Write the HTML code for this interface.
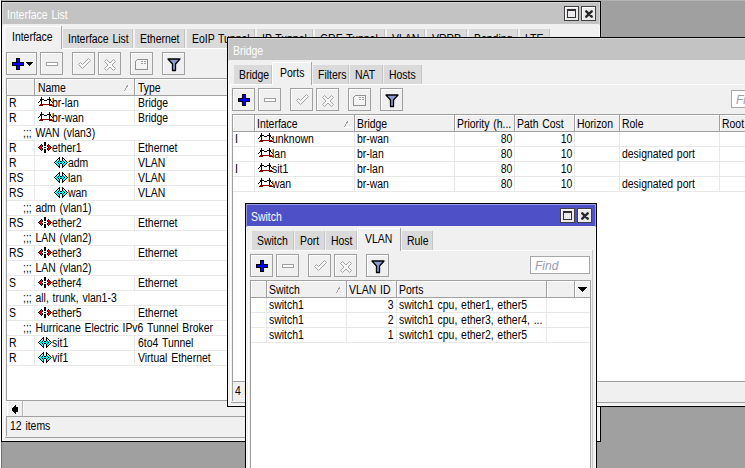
<!DOCTYPE html>
<html><head><meta charset="utf-8"><style>
html,body{margin:0;padding:0;}
body{width:745px;height:468px;overflow:hidden;position:relative;background:#a0a0a0;font-family:"Liberation Sans",sans-serif;font-size:11px;}
.win{position:absolute;overflow:hidden;}
.win div{position:absolute;}
.win svg{display:block;}
.t{white-space:nowrap;line-height:13px;font-size:12px;word-spacing:1px;transform:scaleX(0.87);transform-origin:0 0;}
.t.r{transform-origin:100% 0;}
</style></head><body>
<div style="position:absolute;left:0;top:0;width:745px;height:1px;background:#b4b4b4"></div><div style="position:absolute;left:0;top:0;width:1px;height:468px;background:#ffffff"></div><div style="position:absolute;left:1px;top:0;width:1px;height:468px;background:#707070"></div><div style="position:absolute;left:601px;top:0;width:1px;height:37px;background:#aaaaaa"></div><div class="win" style="left:1px;top:1px;width:600px;height:441px;z-index:1"><div style="left:0px;top:0px;width:600px;height:441px;background:#000;"></div><div style="left:1px;top:1px;width:598px;height:439px;background:#f8f8f8;"></div><div style="left:1px;top:1px;width:598px;height:23px;background:#d8d8d8;"></div><div style="left:2px;top:2px;width:596px;height:437px;background:#f0f0f0;"></div><div style="left:2px;top:2px;width:596px;height:21px;background:#c3c3c3;"></div><div class="t" style="left:6px;top:8px;color:#ffffff;">Interface List</div><div style="left:580px;top:5px;width:15px;height:15px;background:#404040;"></div><div style="left:581px;top:6px;width:13px;height:13px;background:#ffffff;"></div><div style="left:582px;top:7px;width:12px;height:12px;background:#eceaec;"></div><div style="left:584px;top:9px;"><svg width="8" height="8" viewBox="0 0 8 8" shape-rendering="crispEdges"><path d="M1.3,1.3 L6.7,6.7 M6.7,1.3 L1.3,6.7" stroke="#282828" stroke-width="2.4" stroke-linecap="round" shape-rendering="geometricPrecision"/></svg></div><div style="left:563px;top:5px;width:15px;height:15px;background:#404040;"></div><div style="left:564px;top:6px;width:13px;height:13px;background:#ffffff;"></div><div style="left:565px;top:7px;width:12px;height:12px;background:#eceaec;"></div><div style="left:566px;top:8px;width:9px;height:9px;background:#303030;"></div><div style="left:567px;top:10px;width:7px;height:6px;background:#eceaec;"></div><div style="left:3px;top:47px;width:593px;height:1px;background:#ffffff;"></div><div style="left:3px;top:47px;width:1px;height:390px;background:#ffffff;"></div><div style="left:595px;top:47px;width:1px;height:390px;background:#a0a0a0;"></div><div style="left:62px;top:28px;width:70px;height:19px;background:#dadada;"></div><div style="left:131px;top:28px;width:1px;height:19px;background:#c4c4c4;"></div><div class="t" style="left:67px;top:32px;color:#000;">Interface List</div><div style="left:134px;top:28px;width:50px;height:19px;background:#dadada;"></div><div style="left:183px;top:28px;width:1px;height:19px;background:#c4c4c4;"></div><div class="t" style="left:139px;top:32px;color:#000;">Ethernet</div><div style="left:186px;top:28px;width:68px;height:19px;background:#dadada;"></div><div style="left:253px;top:28px;width:1px;height:19px;background:#c4c4c4;"></div><div class="t" style="left:191px;top:32px;color:#000;">EoIP Tunnel</div><div style="left:256px;top:28px;width:56px;height:19px;background:#dadada;"></div><div style="left:311px;top:28px;width:1px;height:19px;background:#c4c4c4;"></div><div class="t" style="left:261px;top:32px;color:#000;">IP Tunnel</div><div style="left:314px;top:28px;width:70px;height:19px;background:#dadada;"></div><div style="left:383px;top:28px;width:1px;height:19px;background:#c4c4c4;"></div><div class="t" style="left:319px;top:32px;color:#000;">GRE Tunnel</div><div style="left:386px;top:28px;width:38px;height:19px;background:#dadada;"></div><div style="left:423px;top:28px;width:1px;height:19px;background:#c4c4c4;"></div><div class="t" style="left:391px;top:32px;color:#000;">VLAN</div><div style="left:426px;top:28px;width:40px;height:19px;background:#dadada;"></div><div style="left:465px;top:28px;width:1px;height:19px;background:#c4c4c4;"></div><div class="t" style="left:431px;top:32px;color:#000;">VRRP</div><div style="left:468px;top:28px;width:49px;height:19px;background:#dadada;"></div><div style="left:516px;top:28px;width:1px;height:19px;background:#c4c4c4;"></div><div class="t" style="left:473px;top:32px;color:#000;">Bonding</div><div style="left:519px;top:28px;width:30px;height:19px;background:#dadada;"></div><div style="left:548px;top:28px;width:1px;height:19px;background:#c4c4c4;"></div><div class="t" style="left:524px;top:32px;color:#000;">LTE</div><div style="left:3px;top:25px;width:58px;height:23px;background:#f0f0f0;"></div><div style="left:3px;top:25px;width:1px;height:23px;background:#ffffff;"></div><div style="left:3px;top:25px;width:58px;height:1px;background:#ffffff;"></div><div style="left:60px;top:25px;width:1px;height:23px;background:#a8a8a8;"></div><div class="t" style="left:11px;top:30px;color:#000;">Interface</div><div style="left:5px;top:51px;width:31px;height:23px;background:#a0a0a0;"></div><div style="left:6px;top:52px;width:29px;height:21px;background:#ffffff;"></div><div style="left:7px;top:53px;width:28px;height:20px;background:#f0f0f0;"></div><div style="left:11px;top:57px;"><svg width="12" height="12" viewBox="0 0 12 12" shape-rendering="crispEdges"><rect x="4" y="0" width="4" height="12" fill="#000"/><rect x="0" y="4" width="12" height="4" fill="#000"/><rect x="5" y="1" width="2" height="10" fill="#0000ff"/><rect x="1" y="5" width="10" height="2" fill="#0000ff"/></svg></div><div style="left:25px;top:61px;"><svg width="7" height="4" viewBox="0 0 7 4" shape-rendering="crispEdges"><polygon points="0,0 7,0 3.5,4" fill="#000"/></svg></div><div style="left:39px;top:51px;width:23px;height:23px;background:#a0a0a0;"></div><div style="left:40px;top:52px;width:21px;height:21px;background:#ffffff;"></div><div style="left:41px;top:53px;width:20px;height:20px;background:#f0f0f0;"></div><div style="left:45px;top:61px;"><svg width="12" height="4" viewBox="0 0 12 4" shape-rendering="crispEdges"><rect x="0.5" y="0.5" width="11" height="3" fill="#fff" stroke="#a0a0a0"/></svg></div><div style="left:71px;top:51px;width:23px;height:23px;background:#a0a0a0;"></div><div style="left:72px;top:52px;width:21px;height:21px;background:#ffffff;"></div><div style="left:73px;top:53px;width:20px;height:20px;background:#f0f0f0;"></div><div style="left:77px;top:57px;"><svg width="14" height="12" viewBox="0 0 14 12" shape-rendering="crispEdges"><polygon points="0.5,6.5 2.5,4.5 4.5,6.5 10.5,0.5 12.5,2.5 4.5,10.5" fill="#f6f6f6" stroke="#a4a4a4" stroke-width="1" shape-rendering="geometricPrecision"/></svg></div><div style="left:97px;top:51px;width:23px;height:23px;background:#a0a0a0;"></div><div style="left:98px;top:52px;width:21px;height:21px;background:#ffffff;"></div><div style="left:99px;top:53px;width:20px;height:20px;background:#f0f0f0;"></div><div style="left:103px;top:58px;"><svg width="13" height="13" viewBox="0 0 13 13" shape-rendering="crispEdges"><polygon points="0.5,2.5 2.5,0.5 6,4 9.5,0.5 11.5,2.5 8,6 11.5,9.5 9.5,11.5 6,8 2.5,11.5 0.5,9.5 4,6" fill="#f6f6f6" stroke="#a4a4a4" stroke-width="1" shape-rendering="geometricPrecision"/></svg></div><div style="left:129px;top:51px;width:23px;height:23px;background:#a0a0a0;"></div><div style="left:130px;top:52px;width:21px;height:21px;background:#ffffff;"></div><div style="left:131px;top:53px;width:20px;height:20px;background:#f0f0f0;"></div><div style="left:134px;top:58px;"><svg width="14" height="11" viewBox="0 0 14 11" shape-rendering="crispEdges"><path d="M2.5,0.5 H12.5 V10.5 H0.5 V2.5 Z" fill="#f4f4f4" stroke="#909090" shape-rendering="crispEdges"/><rect x="2" y="2" width="1" height="1" fill="#ffffff"/><rect x="6" y="2" width="2" height="1" fill="#a0a0a0"/><rect x="9" y="2" width="2" height="1" fill="#a0a0a0"/><rect x="6" y="4" width="2" height="1" fill="#a0a0a0"/><rect x="9" y="4" width="2" height="1" fill="#a0a0a0"/></svg></div><div style="left:161px;top:51px;width:23px;height:23px;background:#a0a0a0;"></div><div style="left:162px;top:52px;width:21px;height:21px;background:#ffffff;"></div><div style="left:163px;top:53px;width:20px;height:20px;background:#f0f0f0;"></div><div style="left:166px;top:57px;"><svg width="14" height="14" viewBox="0 0 14 14" shape-rendering="crispEdges"><path d="M1,1 H13 L8.5,6 V12.5 H5.5 V6 Z" fill="#8c9ad0" stroke="#000" stroke-width="1.3" stroke-linejoin="round" shape-rendering="geometricPrecision"/></svg></div><div style="left:5px;top:77px;width:589px;height:323px;background:#a0a0a0;"></div><div style="left:6px;top:78px;width:587px;height:321px;background:#ffffff;"></div><div style="left:5px;top:77px;width:589px;height:18px;background:#a0a0a0;"></div><div style="left:6px;top:78px;width:587px;height:16px;background:#ffffff;"></div><div style="left:7px;top:79px;width:586px;height:15px;background:#f0f0f0;"></div><div style="left:33px;top:78px;width:1px;height:16px;background:#a0a0a0;"></div><div style="left:34px;top:78px;width:1px;height:16px;background:#ffffff;"></div><div class="t" style="left:37px;top:81px;color:#000;">Name</div><div style="left:133px;top:78px;width:1px;height:16px;background:#a0a0a0;"></div><div style="left:134px;top:78px;width:1px;height:16px;background:#ffffff;"></div><div class="t" style="left:137px;top:81px;color:#000;">Type</div><div style="left:259px;top:78px;width:1px;height:16px;background:#a0a0a0;"></div><div style="left:260px;top:78px;width:1px;height:16px;background:#ffffff;"></div><div style="left:123px;top:84px;"><svg width="8" height="7" viewBox="0 0 8 7" shape-rendering="crispEdges"><rect x="3" y="0" width="1" height="1" fill="#a0a0a0"/><rect x="4" y="0" width="1" height="1" fill="#ffffff"/><rect x="2" y="1" width="2" height="1" fill="#a0a0a0"/><rect x="5" y="1" width="1" height="1" fill="#ffffff"/><rect x="2" y="2" width="1" height="1" fill="#a0a0a0"/><rect x="5" y="2" width="1" height="1" fill="#ffffff"/><rect x="1" y="3" width="1" height="1" fill="#a0a0a0"/><rect x="6" y="3" width="1" height="1" fill="#ffffff"/><rect x="1" y="4" width="1" height="1" fill="#a0a0a0"/><rect x="6" y="4" width="1" height="1" fill="#ffffff"/><rect x="0" y="5" width="1" height="1" fill="#a0a0a0"/><rect x="7" y="5" width="1" height="1" fill="#ffffff"/><rect x="0" y="6" width="8" height="1" fill="#ffffff"/></svg></div><div style="left:6px;top:109px;width:587px;height:1px;background:#e8e8e8;"></div><div style="left:33px;top:95px;width:1px;height:15px;background:#e8e8e8;"></div><div style="left:133px;top:95px;width:1px;height:15px;background:#e8e8e8;"></div><div style="left:259px;top:95px;width:1px;height:15px;background:#e8e8e8;"></div><div class="t" style="left:8px;top:96px;color:#000;">R</div><div style="left:34px;top:95px;"><svg width="18" height="10" viewBox="0 0 18 10" shape-rendering="crispEdges"><rect x="6" y="1" width="1" height="1" fill="#000"/><rect x="14" y="1" width="1" height="1" fill="#000"/><rect x="6" y="2" width="1" height="1" fill="#000"/><rect x="14" y="2" width="1" height="1" fill="#000"/><rect x="5" y="3" width="4" height="1" fill="#000"/><rect x="12" y="3" width="4" height="1" fill="#000"/><rect x="5" y="4" width="2" height="1" fill="#000"/><rect x="9" y="4" width="3" height="1" fill="#000"/><rect x="14" y="4" width="2" height="1" fill="#000"/><rect x="4" y="5" width="1" height="1" fill="#000"/><rect x="6" y="5" width="1" height="1" fill="#000"/><rect x="14" y="5" width="1" height="1" fill="#000"/><rect x="16" y="5" width="1" height="1" fill="#000"/><rect x="3" y="6" width="1" height="1" fill="#000"/><rect x="6" y="6" width="1" height="1" fill="#000"/><rect x="14" y="6" width="1" height="1" fill="#000"/><rect x="17" y="6" width="1" height="1" fill="#000"/><rect x="6" y="7" width="1" height="1" fill="#000"/><rect x="14" y="7" width="1" height="1" fill="#000"/><rect x="5" y="8" width="12" height="1" fill="#880000"/><rect x="4" y="9" width="4" height="1" fill="#880000"/><rect x="14" y="9" width="4" height="1" fill="#880000"/></svg></div><div class="t" style="left:51px;top:96px;color:#000;">br-lan</div><div class="t" style="left:137px;top:96px;color:#000;">Bridge</div><div style="left:6px;top:124px;width:587px;height:1px;background:#e8e8e8;"></div><div style="left:33px;top:110px;width:1px;height:15px;background:#e8e8e8;"></div><div style="left:133px;top:110px;width:1px;height:15px;background:#e8e8e8;"></div><div style="left:259px;top:110px;width:1px;height:15px;background:#e8e8e8;"></div><div class="t" style="left:8px;top:111px;color:#000;">R</div><div style="left:34px;top:110px;"><svg width="18" height="10" viewBox="0 0 18 10" shape-rendering="crispEdges"><rect x="6" y="1" width="1" height="1" fill="#000"/><rect x="14" y="1" width="1" height="1" fill="#000"/><rect x="6" y="2" width="1" height="1" fill="#000"/><rect x="14" y="2" width="1" height="1" fill="#000"/><rect x="5" y="3" width="4" height="1" fill="#000"/><rect x="12" y="3" width="4" height="1" fill="#000"/><rect x="5" y="4" width="2" height="1" fill="#000"/><rect x="9" y="4" width="3" height="1" fill="#000"/><rect x="14" y="4" width="2" height="1" fill="#000"/><rect x="4" y="5" width="1" height="1" fill="#000"/><rect x="6" y="5" width="1" height="1" fill="#000"/><rect x="14" y="5" width="1" height="1" fill="#000"/><rect x="16" y="5" width="1" height="1" fill="#000"/><rect x="3" y="6" width="1" height="1" fill="#000"/><rect x="6" y="6" width="1" height="1" fill="#000"/><rect x="14" y="6" width="1" height="1" fill="#000"/><rect x="17" y="6" width="1" height="1" fill="#000"/><rect x="6" y="7" width="1" height="1" fill="#000"/><rect x="14" y="7" width="1" height="1" fill="#000"/><rect x="5" y="8" width="12" height="1" fill="#880000"/><rect x="4" y="9" width="4" height="1" fill="#880000"/><rect x="14" y="9" width="4" height="1" fill="#880000"/></svg></div><div class="t" style="left:51px;top:111px;color:#000;">br-wan</div><div class="t" style="left:137px;top:111px;color:#000;">Bridge</div><div style="left:6px;top:139px;width:587px;height:1px;background:#e8e8e8;"></div><div class="t" style="left:22px;top:126px;color:#000;">;;; WAN (vlan3)</div><div style="left:6px;top:154px;width:587px;height:1px;background:#e8e8e8;"></div><div style="left:33px;top:140px;width:1px;height:15px;background:#e8e8e8;"></div><div style="left:133px;top:140px;width:1px;height:15px;background:#e8e8e8;"></div><div style="left:259px;top:140px;width:1px;height:15px;background:#e8e8e8;"></div><div class="t" style="left:8px;top:141px;color:#000;">R</div><div style="left:35px;top:140px;"><svg width="16" height="12" viewBox="0 0 16 12" shape-rendering="crispEdges"><rect x="8" y="1" width="2" height="1" fill="#000"/><rect x="8" y="2" width="2" height="1" fill="#000"/><rect x="5" y="3" width="1" height="1" fill="#000"/><rect x="8" y="3" width="2" height="1" fill="#000"/><rect x="12" y="3" width="1" height="1" fill="#000"/><rect x="4" y="4" width="1" height="1" fill="#000"/><rect x="5" y="4" width="1" height="1" fill="#ff0000"/><rect x="6" y="4" width="1" height="1" fill="#000"/><rect x="8" y="4" width="2" height="1" fill="#000"/><rect x="11" y="4" width="1" height="1" fill="#000"/><rect x="12" y="4" width="1" height="1" fill="#ff0000"/><rect x="13" y="4" width="1" height="1" fill="#000"/><rect x="3" y="5" width="1" height="1" fill="#000"/><rect x="4" y="5" width="2" height="1" fill="#ff0000"/><rect x="6" y="5" width="1" height="1" fill="#000"/><rect x="11" y="5" width="1" height="1" fill="#000"/><rect x="12" y="5" width="2" height="1" fill="#ff0000"/><rect x="14" y="5" width="1" height="1" fill="#000"/><rect x="2" y="6" width="1" height="1" fill="#000"/><rect x="3" y="6" width="2" height="1" fill="#ff0000"/><rect x="5" y="6" width="1" height="1" fill="#000"/><rect x="8" y="6" width="2" height="1" fill="#000"/><rect x="12" y="6" width="1" height="1" fill="#000"/><rect x="13" y="6" width="2" height="1" fill="#ff0000"/><rect x="15" y="6" width="1" height="1" fill="#000"/><rect x="3" y="7" width="1" height="1" fill="#000"/><rect x="4" y="7" width="2" height="1" fill="#ff0000"/><rect x="6" y="7" width="1" height="1" fill="#000"/><rect x="11" y="7" width="1" height="1" fill="#000"/><rect x="12" y="7" width="2" height="1" fill="#ff0000"/><rect x="14" y="7" width="1" height="1" fill="#000"/><rect x="4" y="8" width="1" height="1" fill="#000"/><rect x="5" y="8" width="1" height="1" fill="#ff0000"/><rect x="6" y="8" width="1" height="1" fill="#000"/><rect x="8" y="8" width="2" height="1" fill="#000"/><rect x="11" y="8" width="1" height="1" fill="#000"/><rect x="12" y="8" width="1" height="1" fill="#ff0000"/><rect x="13" y="8" width="1" height="1" fill="#000"/><rect x="5" y="9" width="1" height="1" fill="#000"/><rect x="8" y="9" width="2" height="1" fill="#000"/><rect x="12" y="9" width="1" height="1" fill="#000"/><rect x="8" y="10" width="2" height="1" fill="#000"/><rect x="8" y="11" width="2" height="1" fill="#000"/></svg></div><div class="t" style="left:51px;top:141px;color:#000;">ether1</div><div class="t" style="left:137px;top:141px;color:#000;">Ethernet</div><div style="left:6px;top:169px;width:587px;height:1px;background:#e8e8e8;"></div><div style="left:33px;top:155px;width:1px;height:15px;background:#e8e8e8;"></div><div style="left:133px;top:155px;width:1px;height:15px;background:#e8e8e8;"></div><div style="left:259px;top:155px;width:1px;height:15px;background:#e8e8e8;"></div><div class="t" style="left:8px;top:156px;color:#000;">R</div><div style="left:52px;top:155px;"><svg width="16" height="12" viewBox="0 0 16 12" shape-rendering="crispEdges"><rect x="6" y="1" width="1" height="1" fill="#000"/><rect x="9" y="1" width="1" height="1" fill="#000"/><rect x="5" y="2" width="2" height="1" fill="#000"/><rect x="9" y="2" width="2" height="1" fill="#000"/><rect x="4" y="3" width="1" height="1" fill="#000"/><rect x="5" y="3" width="1" height="1" fill="#e8ffff"/><rect x="6" y="3" width="1" height="1" fill="#000"/><rect x="9" y="3" width="1" height="1" fill="#000"/><rect x="10" y="3" width="1" height="1" fill="#e8ffff"/><rect x="11" y="3" width="1" height="1" fill="#000"/><rect x="3" y="4" width="1" height="1" fill="#000"/><rect x="4" y="4" width="1" height="1" fill="#e8ffff"/><rect x="5" y="4" width="1" height="1" fill="#00ffff"/><rect x="6" y="4" width="1" height="1" fill="#000"/><rect x="9" y="4" width="1" height="1" fill="#000"/><rect x="10" y="4" width="1" height="1" fill="#00ffff"/><rect x="11" y="4" width="1" height="1" fill="#e8ffff"/><rect x="12" y="4" width="1" height="1" fill="#000"/><rect x="2" y="5" width="1" height="1" fill="#000"/><rect x="3" y="5" width="2" height="1" fill="#00ffff"/><rect x="5" y="5" width="1" height="1" fill="#000"/><rect x="6" y="5" width="1" height="1" fill="#00ffff"/><rect x="7" y="5" width="2" height="1" fill="#000"/><rect x="9" y="5" width="1" height="1" fill="#00ffff"/><rect x="10" y="5" width="1" height="1" fill="#000"/><rect x="11" y="5" width="2" height="1" fill="#00ffff"/><rect x="13" y="5" width="1" height="1" fill="#000"/><rect x="1" y="6" width="1" height="1" fill="#000"/><rect x="2" y="6" width="1" height="1" fill="#e8ffff"/><rect x="3" y="6" width="1" height="1" fill="#00ffff"/><rect x="4" y="6" width="1" height="1" fill="#000"/><rect x="5" y="6" width="6" height="1" fill="#00ffff"/><rect x="11" y="6" width="1" height="1" fill="#000"/><rect x="12" y="6" width="2" height="1" fill="#00ffff"/><rect x="14" y="6" width="1" height="1" fill="#000"/><rect x="2" y="7" width="1" height="1" fill="#000"/><rect x="3" y="7" width="2" height="1" fill="#00ffff"/><rect x="5" y="7" width="1" height="1" fill="#000"/><rect x="6" y="7" width="1" height="1" fill="#00ffff"/><rect x="7" y="7" width="2" height="1" fill="#000"/><rect x="9" y="7" width="1" height="1" fill="#00ffff"/><rect x="10" y="7" width="1" height="1" fill="#000"/><rect x="11" y="7" width="2" height="1" fill="#00ffff"/><rect x="13" y="7" width="1" height="1" fill="#000"/><rect x="3" y="8" width="1" height="1" fill="#000"/><rect x="4" y="8" width="2" height="1" fill="#00ffff"/><rect x="6" y="8" width="1" height="1" fill="#000"/><rect x="9" y="8" width="1" height="1" fill="#000"/><rect x="10" y="8" width="2" height="1" fill="#00ffff"/><rect x="12" y="8" width="1" height="1" fill="#000"/><rect x="4" y="9" width="1" height="1" fill="#000"/><rect x="5" y="9" width="1" height="1" fill="#00ffff"/><rect x="6" y="9" width="1" height="1" fill="#000"/><rect x="9" y="9" width="1" height="1" fill="#000"/><rect x="10" y="9" width="1" height="1" fill="#00ffff"/><rect x="11" y="9" width="1" height="1" fill="#000"/><rect x="5" y="10" width="2" height="1" fill="#000"/><rect x="9" y="10" width="2" height="1" fill="#000"/><rect x="6" y="11" width="1" height="1" fill="#000"/><rect x="9" y="11" width="1" height="1" fill="#000"/></svg></div><div class="t" style="left:67px;top:156px;color:#000;">adm</div><div class="t" style="left:137px;top:156px;color:#000;">VLAN</div><div style="left:6px;top:184px;width:587px;height:1px;background:#e8e8e8;"></div><div style="left:33px;top:170px;width:1px;height:15px;background:#e8e8e8;"></div><div style="left:133px;top:170px;width:1px;height:15px;background:#e8e8e8;"></div><div style="left:259px;top:170px;width:1px;height:15px;background:#e8e8e8;"></div><div class="t" style="left:8px;top:171px;color:#000;">RS</div><div style="left:52px;top:170px;"><svg width="16" height="12" viewBox="0 0 16 12" shape-rendering="crispEdges"><rect x="6" y="1" width="1" height="1" fill="#000"/><rect x="9" y="1" width="1" height="1" fill="#000"/><rect x="5" y="2" width="2" height="1" fill="#000"/><rect x="9" y="2" width="2" height="1" fill="#000"/><rect x="4" y="3" width="1" height="1" fill="#000"/><rect x="5" y="3" width="1" height="1" fill="#e8ffff"/><rect x="6" y="3" width="1" height="1" fill="#000"/><rect x="9" y="3" width="1" height="1" fill="#000"/><rect x="10" y="3" width="1" height="1" fill="#e8ffff"/><rect x="11" y="3" width="1" height="1" fill="#000"/><rect x="3" y="4" width="1" height="1" fill="#000"/><rect x="4" y="4" width="1" height="1" fill="#e8ffff"/><rect x="5" y="4" width="1" height="1" fill="#00ffff"/><rect x="6" y="4" width="1" height="1" fill="#000"/><rect x="9" y="4" width="1" height="1" fill="#000"/><rect x="10" y="4" width="1" height="1" fill="#00ffff"/><rect x="11" y="4" width="1" height="1" fill="#e8ffff"/><rect x="12" y="4" width="1" height="1" fill="#000"/><rect x="2" y="5" width="1" height="1" fill="#000"/><rect x="3" y="5" width="2" height="1" fill="#00ffff"/><rect x="5" y="5" width="1" height="1" fill="#000"/><rect x="6" y="5" width="1" height="1" fill="#00ffff"/><rect x="7" y="5" width="2" height="1" fill="#000"/><rect x="9" y="5" width="1" height="1" fill="#00ffff"/><rect x="10" y="5" width="1" height="1" fill="#000"/><rect x="11" y="5" width="2" height="1" fill="#00ffff"/><rect x="13" y="5" width="1" height="1" fill="#000"/><rect x="1" y="6" width="1" height="1" fill="#000"/><rect x="2" y="6" width="1" height="1" fill="#e8ffff"/><rect x="3" y="6" width="1" height="1" fill="#00ffff"/><rect x="4" y="6" width="1" height="1" fill="#000"/><rect x="5" y="6" width="6" height="1" fill="#00ffff"/><rect x="11" y="6" width="1" height="1" fill="#000"/><rect x="12" y="6" width="2" height="1" fill="#00ffff"/><rect x="14" y="6" width="1" height="1" fill="#000"/><rect x="2" y="7" width="1" height="1" fill="#000"/><rect x="3" y="7" width="2" height="1" fill="#00ffff"/><rect x="5" y="7" width="1" height="1" fill="#000"/><rect x="6" y="7" width="1" height="1" fill="#00ffff"/><rect x="7" y="7" width="2" height="1" fill="#000"/><rect x="9" y="7" width="1" height="1" fill="#00ffff"/><rect x="10" y="7" width="1" height="1" fill="#000"/><rect x="11" y="7" width="2" height="1" fill="#00ffff"/><rect x="13" y="7" width="1" height="1" fill="#000"/><rect x="3" y="8" width="1" height="1" fill="#000"/><rect x="4" y="8" width="2" height="1" fill="#00ffff"/><rect x="6" y="8" width="1" height="1" fill="#000"/><rect x="9" y="8" width="1" height="1" fill="#000"/><rect x="10" y="8" width="2" height="1" fill="#00ffff"/><rect x="12" y="8" width="1" height="1" fill="#000"/><rect x="4" y="9" width="1" height="1" fill="#000"/><rect x="5" y="9" width="1" height="1" fill="#00ffff"/><rect x="6" y="9" width="1" height="1" fill="#000"/><rect x="9" y="9" width="1" height="1" fill="#000"/><rect x="10" y="9" width="1" height="1" fill="#00ffff"/><rect x="11" y="9" width="1" height="1" fill="#000"/><rect x="5" y="10" width="2" height="1" fill="#000"/><rect x="9" y="10" width="2" height="1" fill="#000"/><rect x="6" y="11" width="1" height="1" fill="#000"/><rect x="9" y="11" width="1" height="1" fill="#000"/></svg></div><div class="t" style="left:67px;top:171px;color:#000;">lan</div><div class="t" style="left:137px;top:171px;color:#000;">VLAN</div><div style="left:6px;top:199px;width:587px;height:1px;background:#e8e8e8;"></div><div style="left:33px;top:185px;width:1px;height:15px;background:#e8e8e8;"></div><div style="left:133px;top:185px;width:1px;height:15px;background:#e8e8e8;"></div><div style="left:259px;top:185px;width:1px;height:15px;background:#e8e8e8;"></div><div class="t" style="left:8px;top:186px;color:#000;">RS</div><div style="left:52px;top:185px;"><svg width="16" height="12" viewBox="0 0 16 12" shape-rendering="crispEdges"><rect x="6" y="1" width="1" height="1" fill="#000"/><rect x="9" y="1" width="1" height="1" fill="#000"/><rect x="5" y="2" width="2" height="1" fill="#000"/><rect x="9" y="2" width="2" height="1" fill="#000"/><rect x="4" y="3" width="1" height="1" fill="#000"/><rect x="5" y="3" width="1" height="1" fill="#e8ffff"/><rect x="6" y="3" width="1" height="1" fill="#000"/><rect x="9" y="3" width="1" height="1" fill="#000"/><rect x="10" y="3" width="1" height="1" fill="#e8ffff"/><rect x="11" y="3" width="1" height="1" fill="#000"/><rect x="3" y="4" width="1" height="1" fill="#000"/><rect x="4" y="4" width="1" height="1" fill="#e8ffff"/><rect x="5" y="4" width="1" height="1" fill="#00ffff"/><rect x="6" y="4" width="1" height="1" fill="#000"/><rect x="9" y="4" width="1" height="1" fill="#000"/><rect x="10" y="4" width="1" height="1" fill="#00ffff"/><rect x="11" y="4" width="1" height="1" fill="#e8ffff"/><rect x="12" y="4" width="1" height="1" fill="#000"/><rect x="2" y="5" width="1" height="1" fill="#000"/><rect x="3" y="5" width="2" height="1" fill="#00ffff"/><rect x="5" y="5" width="1" height="1" fill="#000"/><rect x="6" y="5" width="1" height="1" fill="#00ffff"/><rect x="7" y="5" width="2" height="1" fill="#000"/><rect x="9" y="5" width="1" height="1" fill="#00ffff"/><rect x="10" y="5" width="1" height="1" fill="#000"/><rect x="11" y="5" width="2" height="1" fill="#00ffff"/><rect x="13" y="5" width="1" height="1" fill="#000"/><rect x="1" y="6" width="1" height="1" fill="#000"/><rect x="2" y="6" width="1" height="1" fill="#e8ffff"/><rect x="3" y="6" width="1" height="1" fill="#00ffff"/><rect x="4" y="6" width="1" height="1" fill="#000"/><rect x="5" y="6" width="6" height="1" fill="#00ffff"/><rect x="11" y="6" width="1" height="1" fill="#000"/><rect x="12" y="6" width="2" height="1" fill="#00ffff"/><rect x="14" y="6" width="1" height="1" fill="#000"/><rect x="2" y="7" width="1" height="1" fill="#000"/><rect x="3" y="7" width="2" height="1" fill="#00ffff"/><rect x="5" y="7" width="1" height="1" fill="#000"/><rect x="6" y="7" width="1" height="1" fill="#00ffff"/><rect x="7" y="7" width="2" height="1" fill="#000"/><rect x="9" y="7" width="1" height="1" fill="#00ffff"/><rect x="10" y="7" width="1" height="1" fill="#000"/><rect x="11" y="7" width="2" height="1" fill="#00ffff"/><rect x="13" y="7" width="1" height="1" fill="#000"/><rect x="3" y="8" width="1" height="1" fill="#000"/><rect x="4" y="8" width="2" height="1" fill="#00ffff"/><rect x="6" y="8" width="1" height="1" fill="#000"/><rect x="9" y="8" width="1" height="1" fill="#000"/><rect x="10" y="8" width="2" height="1" fill="#00ffff"/><rect x="12" y="8" width="1" height="1" fill="#000"/><rect x="4" y="9" width="1" height="1" fill="#000"/><rect x="5" y="9" width="1" height="1" fill="#00ffff"/><rect x="6" y="9" width="1" height="1" fill="#000"/><rect x="9" y="9" width="1" height="1" fill="#000"/><rect x="10" y="9" width="1" height="1" fill="#00ffff"/><rect x="11" y="9" width="1" height="1" fill="#000"/><rect x="5" y="10" width="2" height="1" fill="#000"/><rect x="9" y="10" width="2" height="1" fill="#000"/><rect x="6" y="11" width="1" height="1" fill="#000"/><rect x="9" y="11" width="1" height="1" fill="#000"/></svg></div><div class="t" style="left:67px;top:186px;color:#000;">wan</div><div class="t" style="left:137px;top:186px;color:#000;">VLAN</div><div style="left:6px;top:214px;width:587px;height:1px;background:#e8e8e8;"></div><div class="t" style="left:22px;top:201px;color:#000;">;;; adm (vlan1)</div><div style="left:6px;top:229px;width:587px;height:1px;background:#e8e8e8;"></div><div style="left:33px;top:215px;width:1px;height:15px;background:#e8e8e8;"></div><div style="left:133px;top:215px;width:1px;height:15px;background:#e8e8e8;"></div><div style="left:259px;top:215px;width:1px;height:15px;background:#e8e8e8;"></div><div class="t" style="left:8px;top:216px;color:#000;">RS</div><div style="left:35px;top:215px;"><svg width="16" height="12" viewBox="0 0 16 12" shape-rendering="crispEdges"><rect x="8" y="1" width="2" height="1" fill="#000"/><rect x="8" y="2" width="2" height="1" fill="#000"/><rect x="5" y="3" width="1" height="1" fill="#000"/><rect x="8" y="3" width="2" height="1" fill="#000"/><rect x="12" y="3" width="1" height="1" fill="#000"/><rect x="4" y="4" width="1" height="1" fill="#000"/><rect x="5" y="4" width="1" height="1" fill="#ff0000"/><rect x="6" y="4" width="1" height="1" fill="#000"/><rect x="8" y="4" width="2" height="1" fill="#000"/><rect x="11" y="4" width="1" height="1" fill="#000"/><rect x="12" y="4" width="1" height="1" fill="#ff0000"/><rect x="13" y="4" width="1" height="1" fill="#000"/><rect x="3" y="5" width="1" height="1" fill="#000"/><rect x="4" y="5" width="2" height="1" fill="#ff0000"/><rect x="6" y="5" width="1" height="1" fill="#000"/><rect x="11" y="5" width="1" height="1" fill="#000"/><rect x="12" y="5" width="2" height="1" fill="#ff0000"/><rect x="14" y="5" width="1" height="1" fill="#000"/><rect x="2" y="6" width="1" height="1" fill="#000"/><rect x="3" y="6" width="2" height="1" fill="#ff0000"/><rect x="5" y="6" width="1" height="1" fill="#000"/><rect x="8" y="6" width="2" height="1" fill="#000"/><rect x="12" y="6" width="1" height="1" fill="#000"/><rect x="13" y="6" width="2" height="1" fill="#ff0000"/><rect x="15" y="6" width="1" height="1" fill="#000"/><rect x="3" y="7" width="1" height="1" fill="#000"/><rect x="4" y="7" width="2" height="1" fill="#ff0000"/><rect x="6" y="7" width="1" height="1" fill="#000"/><rect x="11" y="7" width="1" height="1" fill="#000"/><rect x="12" y="7" width="2" height="1" fill="#ff0000"/><rect x="14" y="7" width="1" height="1" fill="#000"/><rect x="4" y="8" width="1" height="1" fill="#000"/><rect x="5" y="8" width="1" height="1" fill="#ff0000"/><rect x="6" y="8" width="1" height="1" fill="#000"/><rect x="8" y="8" width="2" height="1" fill="#000"/><rect x="11" y="8" width="1" height="1" fill="#000"/><rect x="12" y="8" width="1" height="1" fill="#ff0000"/><rect x="13" y="8" width="1" height="1" fill="#000"/><rect x="5" y="9" width="1" height="1" fill="#000"/><rect x="8" y="9" width="2" height="1" fill="#000"/><rect x="12" y="9" width="1" height="1" fill="#000"/><rect x="8" y="10" width="2" height="1" fill="#000"/><rect x="8" y="11" width="2" height="1" fill="#000"/></svg></div><div class="t" style="left:51px;top:216px;color:#000;">ether2</div><div class="t" style="left:137px;top:216px;color:#000;">Ethernet</div><div style="left:6px;top:244px;width:587px;height:1px;background:#e8e8e8;"></div><div class="t" style="left:22px;top:231px;color:#000;">;;; LAN (vlan2)</div><div style="left:6px;top:259px;width:587px;height:1px;background:#e8e8e8;"></div><div style="left:33px;top:245px;width:1px;height:15px;background:#e8e8e8;"></div><div style="left:133px;top:245px;width:1px;height:15px;background:#e8e8e8;"></div><div style="left:259px;top:245px;width:1px;height:15px;background:#e8e8e8;"></div><div class="t" style="left:8px;top:246px;color:#000;">RS</div><div style="left:35px;top:245px;"><svg width="16" height="12" viewBox="0 0 16 12" shape-rendering="crispEdges"><rect x="8" y="1" width="2" height="1" fill="#000"/><rect x="8" y="2" width="2" height="1" fill="#000"/><rect x="5" y="3" width="1" height="1" fill="#000"/><rect x="8" y="3" width="2" height="1" fill="#000"/><rect x="12" y="3" width="1" height="1" fill="#000"/><rect x="4" y="4" width="1" height="1" fill="#000"/><rect x="5" y="4" width="1" height="1" fill="#ff0000"/><rect x="6" y="4" width="1" height="1" fill="#000"/><rect x="8" y="4" width="2" height="1" fill="#000"/><rect x="11" y="4" width="1" height="1" fill="#000"/><rect x="12" y="4" width="1" height="1" fill="#ff0000"/><rect x="13" y="4" width="1" height="1" fill="#000"/><rect x="3" y="5" width="1" height="1" fill="#000"/><rect x="4" y="5" width="2" height="1" fill="#ff0000"/><rect x="6" y="5" width="1" height="1" fill="#000"/><rect x="11" y="5" width="1" height="1" fill="#000"/><rect x="12" y="5" width="2" height="1" fill="#ff0000"/><rect x="14" y="5" width="1" height="1" fill="#000"/><rect x="2" y="6" width="1" height="1" fill="#000"/><rect x="3" y="6" width="2" height="1" fill="#ff0000"/><rect x="5" y="6" width="1" height="1" fill="#000"/><rect x="8" y="6" width="2" height="1" fill="#000"/><rect x="12" y="6" width="1" height="1" fill="#000"/><rect x="13" y="6" width="2" height="1" fill="#ff0000"/><rect x="15" y="6" width="1" height="1" fill="#000"/><rect x="3" y="7" width="1" height="1" fill="#000"/><rect x="4" y="7" width="2" height="1" fill="#ff0000"/><rect x="6" y="7" width="1" height="1" fill="#000"/><rect x="11" y="7" width="1" height="1" fill="#000"/><rect x="12" y="7" width="2" height="1" fill="#ff0000"/><rect x="14" y="7" width="1" height="1" fill="#000"/><rect x="4" y="8" width="1" height="1" fill="#000"/><rect x="5" y="8" width="1" height="1" fill="#ff0000"/><rect x="6" y="8" width="1" height="1" fill="#000"/><rect x="8" y="8" width="2" height="1" fill="#000"/><rect x="11" y="8" width="1" height="1" fill="#000"/><rect x="12" y="8" width="1" height="1" fill="#ff0000"/><rect x="13" y="8" width="1" height="1" fill="#000"/><rect x="5" y="9" width="1" height="1" fill="#000"/><rect x="8" y="9" width="2" height="1" fill="#000"/><rect x="12" y="9" width="1" height="1" fill="#000"/><rect x="8" y="10" width="2" height="1" fill="#000"/><rect x="8" y="11" width="2" height="1" fill="#000"/></svg></div><div class="t" style="left:51px;top:246px;color:#000;">ether3</div><div class="t" style="left:137px;top:246px;color:#000;">Ethernet</div><div style="left:6px;top:274px;width:587px;height:1px;background:#e8e8e8;"></div><div class="t" style="left:22px;top:261px;color:#000;">;;; LAN (vlan2)</div><div style="left:6px;top:289px;width:587px;height:1px;background:#e8e8e8;"></div><div style="left:33px;top:275px;width:1px;height:15px;background:#e8e8e8;"></div><div style="left:133px;top:275px;width:1px;height:15px;background:#e8e8e8;"></div><div style="left:259px;top:275px;width:1px;height:15px;background:#e8e8e8;"></div><div class="t" style="left:8px;top:276px;color:#000;">S</div><div style="left:35px;top:275px;"><svg width="16" height="12" viewBox="0 0 16 12" shape-rendering="crispEdges"><rect x="8" y="1" width="2" height="1" fill="#000"/><rect x="8" y="2" width="2" height="1" fill="#000"/><rect x="5" y="3" width="1" height="1" fill="#000"/><rect x="8" y="3" width="2" height="1" fill="#000"/><rect x="12" y="3" width="1" height="1" fill="#000"/><rect x="4" y="4" width="1" height="1" fill="#000"/><rect x="5" y="4" width="1" height="1" fill="#ff0000"/><rect x="6" y="4" width="1" height="1" fill="#000"/><rect x="8" y="4" width="2" height="1" fill="#000"/><rect x="11" y="4" width="1" height="1" fill="#000"/><rect x="12" y="4" width="1" height="1" fill="#ff0000"/><rect x="13" y="4" width="1" height="1" fill="#000"/><rect x="3" y="5" width="1" height="1" fill="#000"/><rect x="4" y="5" width="2" height="1" fill="#ff0000"/><rect x="6" y="5" width="1" height="1" fill="#000"/><rect x="11" y="5" width="1" height="1" fill="#000"/><rect x="12" y="5" width="2" height="1" fill="#ff0000"/><rect x="14" y="5" width="1" height="1" fill="#000"/><rect x="2" y="6" width="1" height="1" fill="#000"/><rect x="3" y="6" width="2" height="1" fill="#ff0000"/><rect x="5" y="6" width="1" height="1" fill="#000"/><rect x="8" y="6" width="2" height="1" fill="#000"/><rect x="12" y="6" width="1" height="1" fill="#000"/><rect x="13" y="6" width="2" height="1" fill="#ff0000"/><rect x="15" y="6" width="1" height="1" fill="#000"/><rect x="3" y="7" width="1" height="1" fill="#000"/><rect x="4" y="7" width="2" height="1" fill="#ff0000"/><rect x="6" y="7" width="1" height="1" fill="#000"/><rect x="11" y="7" width="1" height="1" fill="#000"/><rect x="12" y="7" width="2" height="1" fill="#ff0000"/><rect x="14" y="7" width="1" height="1" fill="#000"/><rect x="4" y="8" width="1" height="1" fill="#000"/><rect x="5" y="8" width="1" height="1" fill="#ff0000"/><rect x="6" y="8" width="1" height="1" fill="#000"/><rect x="8" y="8" width="2" height="1" fill="#000"/><rect x="11" y="8" width="1" height="1" fill="#000"/><rect x="12" y="8" width="1" height="1" fill="#ff0000"/><rect x="13" y="8" width="1" height="1" fill="#000"/><rect x="5" y="9" width="1" height="1" fill="#000"/><rect x="8" y="9" width="2" height="1" fill="#000"/><rect x="12" y="9" width="1" height="1" fill="#000"/><rect x="8" y="10" width="2" height="1" fill="#000"/><rect x="8" y="11" width="2" height="1" fill="#000"/></svg></div><div class="t" style="left:51px;top:276px;color:#000;">ether4</div><div class="t" style="left:137px;top:276px;color:#000;">Ethernet</div><div style="left:6px;top:304px;width:587px;height:1px;background:#e8e8e8;"></div><div class="t" style="left:22px;top:291px;color:#000;">;;; all, trunk, vlan1-3</div><div style="left:6px;top:319px;width:587px;height:1px;background:#e8e8e8;"></div><div style="left:33px;top:305px;width:1px;height:15px;background:#e8e8e8;"></div><div style="left:133px;top:305px;width:1px;height:15px;background:#e8e8e8;"></div><div style="left:259px;top:305px;width:1px;height:15px;background:#e8e8e8;"></div><div class="t" style="left:8px;top:306px;color:#000;">S</div><div style="left:35px;top:305px;"><svg width="16" height="12" viewBox="0 0 16 12" shape-rendering="crispEdges"><rect x="8" y="1" width="2" height="1" fill="#000"/><rect x="8" y="2" width="2" height="1" fill="#000"/><rect x="5" y="3" width="1" height="1" fill="#000"/><rect x="8" y="3" width="2" height="1" fill="#000"/><rect x="12" y="3" width="1" height="1" fill="#000"/><rect x="4" y="4" width="1" height="1" fill="#000"/><rect x="5" y="4" width="1" height="1" fill="#ff0000"/><rect x="6" y="4" width="1" height="1" fill="#000"/><rect x="8" y="4" width="2" height="1" fill="#000"/><rect x="11" y="4" width="1" height="1" fill="#000"/><rect x="12" y="4" width="1" height="1" fill="#ff0000"/><rect x="13" y="4" width="1" height="1" fill="#000"/><rect x="3" y="5" width="1" height="1" fill="#000"/><rect x="4" y="5" width="2" height="1" fill="#ff0000"/><rect x="6" y="5" width="1" height="1" fill="#000"/><rect x="11" y="5" width="1" height="1" fill="#000"/><rect x="12" y="5" width="2" height="1" fill="#ff0000"/><rect x="14" y="5" width="1" height="1" fill="#000"/><rect x="2" y="6" width="1" height="1" fill="#000"/><rect x="3" y="6" width="2" height="1" fill="#ff0000"/><rect x="5" y="6" width="1" height="1" fill="#000"/><rect x="8" y="6" width="2" height="1" fill="#000"/><rect x="12" y="6" width="1" height="1" fill="#000"/><rect x="13" y="6" width="2" height="1" fill="#ff0000"/><rect x="15" y="6" width="1" height="1" fill="#000"/><rect x="3" y="7" width="1" height="1" fill="#000"/><rect x="4" y="7" width="2" height="1" fill="#ff0000"/><rect x="6" y="7" width="1" height="1" fill="#000"/><rect x="11" y="7" width="1" height="1" fill="#000"/><rect x="12" y="7" width="2" height="1" fill="#ff0000"/><rect x="14" y="7" width="1" height="1" fill="#000"/><rect x="4" y="8" width="1" height="1" fill="#000"/><rect x="5" y="8" width="1" height="1" fill="#ff0000"/><rect x="6" y="8" width="1" height="1" fill="#000"/><rect x="8" y="8" width="2" height="1" fill="#000"/><rect x="11" y="8" width="1" height="1" fill="#000"/><rect x="12" y="8" width="1" height="1" fill="#ff0000"/><rect x="13" y="8" width="1" height="1" fill="#000"/><rect x="5" y="9" width="1" height="1" fill="#000"/><rect x="8" y="9" width="2" height="1" fill="#000"/><rect x="12" y="9" width="1" height="1" fill="#000"/><rect x="8" y="10" width="2" height="1" fill="#000"/><rect x="8" y="11" width="2" height="1" fill="#000"/></svg></div><div class="t" style="left:51px;top:306px;color:#000;">ether5</div><div class="t" style="left:137px;top:306px;color:#000;">Ethernet</div><div style="left:6px;top:334px;width:587px;height:1px;background:#e8e8e8;"></div><div class="t" style="left:22px;top:321px;color:#000;">;;; Hurricane Electric IPv6 Tunnel Broker</div><div style="left:6px;top:349px;width:587px;height:1px;background:#e8e8e8;"></div><div style="left:33px;top:335px;width:1px;height:15px;background:#e8e8e8;"></div><div style="left:133px;top:335px;width:1px;height:15px;background:#e8e8e8;"></div><div style="left:259px;top:335px;width:1px;height:15px;background:#e8e8e8;"></div><div class="t" style="left:8px;top:336px;color:#000;">R</div><div style="left:36px;top:335px;"><svg width="16" height="12" viewBox="0 0 16 12" shape-rendering="crispEdges"><rect x="6" y="1" width="1" height="1" fill="#000"/><rect x="9" y="1" width="1" height="1" fill="#000"/><rect x="5" y="2" width="2" height="1" fill="#000"/><rect x="9" y="2" width="2" height="1" fill="#000"/><rect x="4" y="3" width="1" height="1" fill="#000"/><rect x="5" y="3" width="1" height="1" fill="#e8ffff"/><rect x="6" y="3" width="1" height="1" fill="#000"/><rect x="9" y="3" width="1" height="1" fill="#000"/><rect x="10" y="3" width="1" height="1" fill="#e8ffff"/><rect x="11" y="3" width="1" height="1" fill="#000"/><rect x="3" y="4" width="1" height="1" fill="#000"/><rect x="4" y="4" width="1" height="1" fill="#e8ffff"/><rect x="5" y="4" width="1" height="1" fill="#00ffff"/><rect x="6" y="4" width="1" height="1" fill="#000"/><rect x="9" y="4" width="1" height="1" fill="#000"/><rect x="10" y="4" width="1" height="1" fill="#00ffff"/><rect x="11" y="4" width="1" height="1" fill="#e8ffff"/><rect x="12" y="4" width="1" height="1" fill="#000"/><rect x="2" y="5" width="1" height="1" fill="#000"/><rect x="3" y="5" width="2" height="1" fill="#00ffff"/><rect x="5" y="5" width="1" height="1" fill="#000"/><rect x="6" y="5" width="1" height="1" fill="#00ffff"/><rect x="7" y="5" width="2" height="1" fill="#000"/><rect x="9" y="5" width="1" height="1" fill="#00ffff"/><rect x="10" y="5" width="1" height="1" fill="#000"/><rect x="11" y="5" width="2" height="1" fill="#00ffff"/><rect x="13" y="5" width="1" height="1" fill="#000"/><rect x="1" y="6" width="1" height="1" fill="#000"/><rect x="2" y="6" width="1" height="1" fill="#e8ffff"/><rect x="3" y="6" width="1" height="1" fill="#00ffff"/><rect x="4" y="6" width="1" height="1" fill="#000"/><rect x="5" y="6" width="6" height="1" fill="#00ffff"/><rect x="11" y="6" width="1" height="1" fill="#000"/><rect x="12" y="6" width="2" height="1" fill="#00ffff"/><rect x="14" y="6" width="1" height="1" fill="#000"/><rect x="2" y="7" width="1" height="1" fill="#000"/><rect x="3" y="7" width="2" height="1" fill="#00ffff"/><rect x="5" y="7" width="1" height="1" fill="#000"/><rect x="6" y="7" width="1" height="1" fill="#00ffff"/><rect x="7" y="7" width="2" height="1" fill="#000"/><rect x="9" y="7" width="1" height="1" fill="#00ffff"/><rect x="10" y="7" width="1" height="1" fill="#000"/><rect x="11" y="7" width="2" height="1" fill="#00ffff"/><rect x="13" y="7" width="1" height="1" fill="#000"/><rect x="3" y="8" width="1" height="1" fill="#000"/><rect x="4" y="8" width="2" height="1" fill="#00ffff"/><rect x="6" y="8" width="1" height="1" fill="#000"/><rect x="9" y="8" width="1" height="1" fill="#000"/><rect x="10" y="8" width="2" height="1" fill="#00ffff"/><rect x="12" y="8" width="1" height="1" fill="#000"/><rect x="4" y="9" width="1" height="1" fill="#000"/><rect x="5" y="9" width="1" height="1" fill="#00ffff"/><rect x="6" y="9" width="1" height="1" fill="#000"/><rect x="9" y="9" width="1" height="1" fill="#000"/><rect x="10" y="9" width="1" height="1" fill="#00ffff"/><rect x="11" y="9" width="1" height="1" fill="#000"/><rect x="5" y="10" width="2" height="1" fill="#000"/><rect x="9" y="10" width="2" height="1" fill="#000"/><rect x="6" y="11" width="1" height="1" fill="#000"/><rect x="9" y="11" width="1" height="1" fill="#000"/></svg></div><div class="t" style="left:51px;top:336px;color:#000;">sit1</div><div class="t" style="left:137px;top:336px;color:#000;">6to4 Tunnel</div><div style="left:6px;top:364px;width:587px;height:1px;background:#e8e8e8;"></div><div style="left:33px;top:350px;width:1px;height:15px;background:#e8e8e8;"></div><div style="left:133px;top:350px;width:1px;height:15px;background:#e8e8e8;"></div><div style="left:259px;top:350px;width:1px;height:15px;background:#e8e8e8;"></div><div class="t" style="left:8px;top:351px;color:#000;">R</div><div style="left:36px;top:350px;"><svg width="16" height="12" viewBox="0 0 16 12" shape-rendering="crispEdges"><rect x="6" y="1" width="1" height="1" fill="#000"/><rect x="9" y="1" width="1" height="1" fill="#000"/><rect x="5" y="2" width="2" height="1" fill="#000"/><rect x="9" y="2" width="2" height="1" fill="#000"/><rect x="4" y="3" width="1" height="1" fill="#000"/><rect x="5" y="3" width="1" height="1" fill="#e8ffff"/><rect x="6" y="3" width="1" height="1" fill="#000"/><rect x="9" y="3" width="1" height="1" fill="#000"/><rect x="10" y="3" width="1" height="1" fill="#e8ffff"/><rect x="11" y="3" width="1" height="1" fill="#000"/><rect x="3" y="4" width="1" height="1" fill="#000"/><rect x="4" y="4" width="1" height="1" fill="#e8ffff"/><rect x="5" y="4" width="1" height="1" fill="#00ffff"/><rect x="6" y="4" width="1" height="1" fill="#000"/><rect x="9" y="4" width="1" height="1" fill="#000"/><rect x="10" y="4" width="1" height="1" fill="#00ffff"/><rect x="11" y="4" width="1" height="1" fill="#e8ffff"/><rect x="12" y="4" width="1" height="1" fill="#000"/><rect x="2" y="5" width="1" height="1" fill="#000"/><rect x="3" y="5" width="2" height="1" fill="#00ffff"/><rect x="5" y="5" width="1" height="1" fill="#000"/><rect x="6" y="5" width="1" height="1" fill="#00ffff"/><rect x="7" y="5" width="2" height="1" fill="#000"/><rect x="9" y="5" width="1" height="1" fill="#00ffff"/><rect x="10" y="5" width="1" height="1" fill="#000"/><rect x="11" y="5" width="2" height="1" fill="#00ffff"/><rect x="13" y="5" width="1" height="1" fill="#000"/><rect x="1" y="6" width="1" height="1" fill="#000"/><rect x="2" y="6" width="1" height="1" fill="#e8ffff"/><rect x="3" y="6" width="1" height="1" fill="#00ffff"/><rect x="4" y="6" width="1" height="1" fill="#000"/><rect x="5" y="6" width="6" height="1" fill="#00ffff"/><rect x="11" y="6" width="1" height="1" fill="#000"/><rect x="12" y="6" width="2" height="1" fill="#00ffff"/><rect x="14" y="6" width="1" height="1" fill="#000"/><rect x="2" y="7" width="1" height="1" fill="#000"/><rect x="3" y="7" width="2" height="1" fill="#00ffff"/><rect x="5" y="7" width="1" height="1" fill="#000"/><rect x="6" y="7" width="1" height="1" fill="#00ffff"/><rect x="7" y="7" width="2" height="1" fill="#000"/><rect x="9" y="7" width="1" height="1" fill="#00ffff"/><rect x="10" y="7" width="1" height="1" fill="#000"/><rect x="11" y="7" width="2" height="1" fill="#00ffff"/><rect x="13" y="7" width="1" height="1" fill="#000"/><rect x="3" y="8" width="1" height="1" fill="#000"/><rect x="4" y="8" width="2" height="1" fill="#00ffff"/><rect x="6" y="8" width="1" height="1" fill="#000"/><rect x="9" y="8" width="1" height="1" fill="#000"/><rect x="10" y="8" width="2" height="1" fill="#00ffff"/><rect x="12" y="8" width="1" height="1" fill="#000"/><rect x="4" y="9" width="1" height="1" fill="#000"/><rect x="5" y="9" width="1" height="1" fill="#00ffff"/><rect x="6" y="9" width="1" height="1" fill="#000"/><rect x="9" y="9" width="1" height="1" fill="#000"/><rect x="10" y="9" width="1" height="1" fill="#00ffff"/><rect x="11" y="9" width="1" height="1" fill="#000"/><rect x="5" y="10" width="2" height="1" fill="#000"/><rect x="9" y="10" width="2" height="1" fill="#000"/><rect x="6" y="11" width="1" height="1" fill="#000"/><rect x="9" y="11" width="1" height="1" fill="#000"/></svg></div><div class="t" style="left:51px;top:351px;color:#000;">vif1</div><div class="t" style="left:137px;top:351px;color:#000;">Virtual Ethernet</div><div style="left:5px;top:400px;width:589px;height:15px;background:#f0f0f0;"></div><div style="left:21px;top:400px;width:1px;height:15px;background:#b8b8b8;"></div><div style="left:11px;top:404px;"><svg width="6" height="9" viewBox="0 0 6 9" shape-rendering="crispEdges"><rect x="3" y="0" width="1" height="1" fill="#000"/><rect x="2" y="1" width="2" height="1" fill="#000"/><rect x="1" y="2" width="5" height="1" fill="#000"/><rect x="0" y="3" width="6" height="1" fill="#000"/><rect x="0" y="4" width="6" height="1" fill="#000"/><rect x="0" y="5" width="6" height="1" fill="#000"/><rect x="1" y="6" width="5" height="1" fill="#000"/><rect x="2" y="7" width="2" height="1" fill="#000"/><rect x="3" y="8" width="1" height="1" fill="#000"/></svg></div><div style="left:6px;top:400px;width:1px;height:15px;background:#ffffff;"></div><div style="left:6px;top:400px;width:15px;height:1px;background:#ffffff;"></div><div style="left:22px;top:400px;width:1px;height:15px;background:#ffffff;"></div><div style="left:5px;top:415px;width:589px;height:1px;background:#a0a0a0;"></div><div style="left:5px;top:415px;width:1px;height:20px;background:#a0a0a0;"></div><div style="left:4px;top:436px;width:590px;height:1px;background:#a0a0a0;"></div><div class="t" style="left:9px;top:419px;color:#000;">12 items</div></div><div class="win" style="left:227px;top:37px;width:874px;height:370px;z-index:2"><div style="left:0px;top:0px;width:874px;height:370px;background:#000;"></div><div style="left:1px;top:1px;width:872px;height:368px;background:#f8f8f8;"></div><div style="left:1px;top:1px;width:872px;height:23px;background:#d8d8d8;"></div><div style="left:2px;top:2px;width:870px;height:366px;background:#f0f0f0;"></div><div style="left:2px;top:2px;width:870px;height:21px;background:#c3c3c3;"></div><div class="t" style="left:6px;top:8px;color:#ffffff;">Bridge</div><div style="left:3px;top:47px;width:867px;height:1px;background:#ffffff;"></div><div style="left:3px;top:47px;width:1px;height:319px;background:#ffffff;"></div><div style="left:869px;top:47px;width:1px;height:319px;background:#a0a0a0;"></div><div style="left:7px;top:28px;width:38px;height:19px;background:#dadada;"></div><div style="left:44px;top:28px;width:1px;height:19px;background:#c4c4c4;"></div><div class="t" style="left:12px;top:32px;color:#000;">Bridge</div><div style="left:86px;top:28px;width:36px;height:19px;background:#dadada;"></div><div style="left:121px;top:28px;width:1px;height:19px;background:#c4c4c4;"></div><div class="t" style="left:91px;top:32px;color:#000;">Filters</div><div style="left:123px;top:28px;width:33px;height:19px;background:#dadada;"></div><div style="left:155px;top:28px;width:1px;height:19px;background:#c4c4c4;"></div><div class="t" style="left:128px;top:32px;color:#000;">NAT</div><div style="left:157px;top:28px;width:38px;height:19px;background:#dadada;"></div><div style="left:194px;top:28px;width:1px;height:19px;background:#c4c4c4;"></div><div class="t" style="left:162px;top:32px;color:#000;">Hosts</div><div style="left:45px;top:25px;width:40px;height:23px;background:#f0f0f0;"></div><div style="left:45px;top:25px;width:1px;height:23px;background:#ffffff;"></div><div style="left:45px;top:25px;width:40px;height:1px;background:#ffffff;"></div><div style="left:84px;top:25px;width:1px;height:23px;background:#a8a8a8;"></div><div class="t" style="left:53px;top:30px;color:#000;">Ports</div><div style="left:5px;top:51px;width:23px;height:23px;background:#a0a0a0;"></div><div style="left:6px;top:52px;width:21px;height:21px;background:#ffffff;"></div><div style="left:7px;top:53px;width:20px;height:20px;background:#f0f0f0;"></div><div style="left:11px;top:57px;"><svg width="12" height="12" viewBox="0 0 12 12" shape-rendering="crispEdges"><rect x="4" y="0" width="4" height="12" fill="#000"/><rect x="0" y="4" width="12" height="4" fill="#000"/><rect x="5" y="1" width="2" height="10" fill="#0000ff"/><rect x="1" y="5" width="10" height="2" fill="#0000ff"/></svg></div><div style="left:31px;top:51px;width:23px;height:23px;background:#a0a0a0;"></div><div style="left:32px;top:52px;width:21px;height:21px;background:#ffffff;"></div><div style="left:33px;top:53px;width:20px;height:20px;background:#f0f0f0;"></div><div style="left:37px;top:61px;"><svg width="12" height="4" viewBox="0 0 12 4" shape-rendering="crispEdges"><rect x="0.5" y="0.5" width="11" height="3" fill="#fff" stroke="#a0a0a0"/></svg></div><div style="left:63px;top:51px;width:23px;height:23px;background:#a0a0a0;"></div><div style="left:64px;top:52px;width:21px;height:21px;background:#ffffff;"></div><div style="left:65px;top:53px;width:20px;height:20px;background:#f0f0f0;"></div><div style="left:69px;top:57px;"><svg width="14" height="12" viewBox="0 0 14 12" shape-rendering="crispEdges"><polygon points="0.5,6.5 2.5,4.5 4.5,6.5 10.5,0.5 12.5,2.5 4.5,10.5" fill="#f6f6f6" stroke="#a4a4a4" stroke-width="1" shape-rendering="geometricPrecision"/></svg></div><div style="left:89px;top:51px;width:23px;height:23px;background:#a0a0a0;"></div><div style="left:90px;top:52px;width:21px;height:21px;background:#ffffff;"></div><div style="left:91px;top:53px;width:20px;height:20px;background:#f0f0f0;"></div><div style="left:95px;top:58px;"><svg width="13" height="13" viewBox="0 0 13 13" shape-rendering="crispEdges"><polygon points="0.5,2.5 2.5,0.5 6,4 9.5,0.5 11.5,2.5 8,6 11.5,9.5 9.5,11.5 6,8 2.5,11.5 0.5,9.5 4,6" fill="#f6f6f6" stroke="#a4a4a4" stroke-width="1" shape-rendering="geometricPrecision"/></svg></div><div style="left:121px;top:51px;width:23px;height:23px;background:#a0a0a0;"></div><div style="left:122px;top:52px;width:21px;height:21px;background:#ffffff;"></div><div style="left:123px;top:53px;width:20px;height:20px;background:#f0f0f0;"></div><div style="left:126px;top:58px;"><svg width="14" height="11" viewBox="0 0 14 11" shape-rendering="crispEdges"><path d="M2.5,0.5 H12.5 V10.5 H0.5 V2.5 Z" fill="#f4f4f4" stroke="#909090" shape-rendering="crispEdges"/><rect x="2" y="2" width="1" height="1" fill="#ffffff"/><rect x="6" y="2" width="2" height="1" fill="#a0a0a0"/><rect x="9" y="2" width="2" height="1" fill="#a0a0a0"/><rect x="6" y="4" width="2" height="1" fill="#a0a0a0"/><rect x="9" y="4" width="2" height="1" fill="#a0a0a0"/></svg></div><div style="left:153px;top:51px;width:23px;height:23px;background:#a0a0a0;"></div><div style="left:154px;top:52px;width:21px;height:21px;background:#ffffff;"></div><div style="left:155px;top:53px;width:20px;height:20px;background:#f0f0f0;"></div><div style="left:158px;top:57px;"><svg width="14" height="14" viewBox="0 0 14 14" shape-rendering="crispEdges"><path d="M1,1 H13 L8.5,6 V12.5 H5.5 V6 Z" fill="#8c9ad0" stroke="#000" stroke-width="1.3" stroke-linejoin="round" shape-rendering="geometricPrecision"/></svg></div><div style="left:504px;top:53px;width:70px;height:18px;background:#a8a8a8;"></div><div style="left:505px;top:54px;width:68px;height:16px;background:#ffffff;"></div><div class="t" style="left:509px;top:57px;color:#9a9ab0;font-style:italic;transform:none;">Find</div><div style="left:5px;top:77px;width:863px;height:268px;background:#a0a0a0;"></div><div style="left:6px;top:78px;width:861px;height:266px;background:#ffffff;"></div><div style="left:5px;top:77px;width:863px;height:18px;background:#a0a0a0;"></div><div style="left:6px;top:78px;width:861px;height:16px;background:#ffffff;"></div><div style="left:7px;top:79px;width:860px;height:15px;background:#f0f0f0;"></div><div style="left:27px;top:78px;width:1px;height:16px;background:#a0a0a0;"></div><div style="left:28px;top:78px;width:1px;height:16px;background:#ffffff;"></div><div class="t" style="left:30px;top:81px;color:#000;">Interface</div><div style="left:127px;top:78px;width:1px;height:16px;background:#a0a0a0;"></div><div style="left:128px;top:78px;width:1px;height:16px;background:#ffffff;"></div><div class="t" style="left:130px;top:81px;color:#000;">Bridge</div><div style="left:227px;top:78px;width:1px;height:16px;background:#a0a0a0;"></div><div style="left:228px;top:78px;width:1px;height:16px;background:#ffffff;"></div><div class="t" style="left:230px;top:81px;color:#000;">Priority (h...</div><div style="left:287px;top:78px;width:1px;height:16px;background:#a0a0a0;"></div><div style="left:288px;top:78px;width:1px;height:16px;background:#ffffff;"></div><div class="t" style="left:290px;top:81px;color:#000;">Path Cost</div><div style="left:347px;top:78px;width:1px;height:16px;background:#a0a0a0;"></div><div style="left:348px;top:78px;width:1px;height:16px;background:#ffffff;"></div><div class="t" style="left:350px;top:81px;color:#000;">Horizon</div><div style="left:392px;top:78px;width:1px;height:16px;background:#a0a0a0;"></div><div style="left:393px;top:78px;width:1px;height:16px;background:#ffffff;"></div><div class="t" style="left:395px;top:81px;color:#000;">Role</div><div style="left:492px;top:78px;width:1px;height:16px;background:#a0a0a0;"></div><div style="left:493px;top:78px;width:1px;height:16px;background:#ffffff;"></div><div class="t" style="left:495px;top:81px;color:#000;">Root</div><div style="left:117px;top:84px;"><svg width="8" height="7" viewBox="0 0 8 7" shape-rendering="crispEdges"><rect x="3" y="0" width="1" height="1" fill="#a0a0a0"/><rect x="4" y="0" width="1" height="1" fill="#ffffff"/><rect x="2" y="1" width="2" height="1" fill="#a0a0a0"/><rect x="5" y="1" width="1" height="1" fill="#ffffff"/><rect x="2" y="2" width="1" height="1" fill="#a0a0a0"/><rect x="5" y="2" width="1" height="1" fill="#ffffff"/><rect x="1" y="3" width="1" height="1" fill="#a0a0a0"/><rect x="6" y="3" width="1" height="1" fill="#ffffff"/><rect x="1" y="4" width="1" height="1" fill="#a0a0a0"/><rect x="6" y="4" width="1" height="1" fill="#ffffff"/><rect x="0" y="5" width="1" height="1" fill="#a0a0a0"/><rect x="7" y="5" width="1" height="1" fill="#ffffff"/><rect x="0" y="6" width="8" height="1" fill="#ffffff"/></svg></div><div style="left:6px;top:109px;width:861px;height:1px;background:#e8e8e8;"></div><div style="left:27px;top:95px;width:1px;height:15px;background:#e8e8e8;"></div><div style="left:127px;top:95px;width:1px;height:15px;background:#e8e8e8;"></div><div style="left:227px;top:95px;width:1px;height:15px;background:#e8e8e8;"></div><div style="left:287px;top:95px;width:1px;height:15px;background:#e8e8e8;"></div><div style="left:347px;top:95px;width:1px;height:15px;background:#e8e8e8;"></div><div style="left:392px;top:95px;width:1px;height:15px;background:#e8e8e8;"></div><div style="left:492px;top:95px;width:1px;height:15px;background:#e8e8e8;"></div><div style="left:573px;top:95px;width:1px;height:15px;background:#e8e8e8;"></div><div class="t" style="left:8px;top:96px;color:#000;">I</div><div style="left:28px;top:95px;"><svg width="18" height="10" viewBox="0 0 18 10" shape-rendering="crispEdges"><rect x="6" y="1" width="1" height="1" fill="#000"/><rect x="14" y="1" width="1" height="1" fill="#000"/><rect x="6" y="2" width="1" height="1" fill="#000"/><rect x="14" y="2" width="1" height="1" fill="#000"/><rect x="5" y="3" width="4" height="1" fill="#000"/><rect x="12" y="3" width="4" height="1" fill="#000"/><rect x="5" y="4" width="2" height="1" fill="#000"/><rect x="9" y="4" width="3" height="1" fill="#000"/><rect x="14" y="4" width="2" height="1" fill="#000"/><rect x="4" y="5" width="1" height="1" fill="#000"/><rect x="6" y="5" width="1" height="1" fill="#000"/><rect x="14" y="5" width="1" height="1" fill="#000"/><rect x="16" y="5" width="1" height="1" fill="#000"/><rect x="3" y="6" width="1" height="1" fill="#000"/><rect x="6" y="6" width="1" height="1" fill="#000"/><rect x="14" y="6" width="1" height="1" fill="#000"/><rect x="17" y="6" width="1" height="1" fill="#000"/><rect x="6" y="7" width="1" height="1" fill="#000"/><rect x="14" y="7" width="1" height="1" fill="#000"/><rect x="5" y="8" width="12" height="1" fill="#880000"/><rect x="4" y="9" width="4" height="1" fill="#880000"/><rect x="14" y="9" width="4" height="1" fill="#880000"/></svg></div><div class="t" style="left:45px;top:96px;color:#000;">unknown</div><div class="t" style="left:130px;top:96px;color:#000;">br-wan</div><div class="t r" style="right:589px;top:96px;color:#000;">80</div><div class="t r" style="right:529px;top:96px;color:#000;">10</div><div style="left:6px;top:124px;width:861px;height:1px;background:#e8e8e8;"></div><div style="left:27px;top:110px;width:1px;height:15px;background:#e8e8e8;"></div><div style="left:127px;top:110px;width:1px;height:15px;background:#e8e8e8;"></div><div style="left:227px;top:110px;width:1px;height:15px;background:#e8e8e8;"></div><div style="left:287px;top:110px;width:1px;height:15px;background:#e8e8e8;"></div><div style="left:347px;top:110px;width:1px;height:15px;background:#e8e8e8;"></div><div style="left:392px;top:110px;width:1px;height:15px;background:#e8e8e8;"></div><div style="left:492px;top:110px;width:1px;height:15px;background:#e8e8e8;"></div><div style="left:573px;top:110px;width:1px;height:15px;background:#e8e8e8;"></div><div style="left:28px;top:110px;"><svg width="18" height="10" viewBox="0 0 18 10" shape-rendering="crispEdges"><rect x="6" y="1" width="1" height="1" fill="#000"/><rect x="14" y="1" width="1" height="1" fill="#000"/><rect x="6" y="2" width="1" height="1" fill="#000"/><rect x="14" y="2" width="1" height="1" fill="#000"/><rect x="5" y="3" width="4" height="1" fill="#000"/><rect x="12" y="3" width="4" height="1" fill="#000"/><rect x="5" y="4" width="2" height="1" fill="#000"/><rect x="9" y="4" width="3" height="1" fill="#000"/><rect x="14" y="4" width="2" height="1" fill="#000"/><rect x="4" y="5" width="1" height="1" fill="#000"/><rect x="6" y="5" width="1" height="1" fill="#000"/><rect x="14" y="5" width="1" height="1" fill="#000"/><rect x="16" y="5" width="1" height="1" fill="#000"/><rect x="3" y="6" width="1" height="1" fill="#000"/><rect x="6" y="6" width="1" height="1" fill="#000"/><rect x="14" y="6" width="1" height="1" fill="#000"/><rect x="17" y="6" width="1" height="1" fill="#000"/><rect x="6" y="7" width="1" height="1" fill="#000"/><rect x="14" y="7" width="1" height="1" fill="#000"/><rect x="5" y="8" width="12" height="1" fill="#880000"/><rect x="4" y="9" width="4" height="1" fill="#880000"/><rect x="14" y="9" width="4" height="1" fill="#880000"/></svg></div><div class="t" style="left:45px;top:111px;color:#000;">lan</div><div class="t" style="left:130px;top:111px;color:#000;">br-lan</div><div class="t r" style="right:589px;top:111px;color:#000;">80</div><div class="t r" style="right:529px;top:111px;color:#000;">10</div><div class="t" style="left:395px;top:111px;color:#000;">designated port</div><div style="left:6px;top:139px;width:861px;height:1px;background:#e8e8e8;"></div><div style="left:27px;top:125px;width:1px;height:15px;background:#e8e8e8;"></div><div style="left:127px;top:125px;width:1px;height:15px;background:#e8e8e8;"></div><div style="left:227px;top:125px;width:1px;height:15px;background:#e8e8e8;"></div><div style="left:287px;top:125px;width:1px;height:15px;background:#e8e8e8;"></div><div style="left:347px;top:125px;width:1px;height:15px;background:#e8e8e8;"></div><div style="left:392px;top:125px;width:1px;height:15px;background:#e8e8e8;"></div><div style="left:492px;top:125px;width:1px;height:15px;background:#e8e8e8;"></div><div style="left:573px;top:125px;width:1px;height:15px;background:#e8e8e8;"></div><div class="t" style="left:8px;top:126px;color:#000;">I</div><div style="left:28px;top:125px;"><svg width="18" height="10" viewBox="0 0 18 10" shape-rendering="crispEdges"><rect x="6" y="1" width="1" height="1" fill="#000"/><rect x="14" y="1" width="1" height="1" fill="#000"/><rect x="6" y="2" width="1" height="1" fill="#000"/><rect x="14" y="2" width="1" height="1" fill="#000"/><rect x="5" y="3" width="4" height="1" fill="#000"/><rect x="12" y="3" width="4" height="1" fill="#000"/><rect x="5" y="4" width="2" height="1" fill="#000"/><rect x="9" y="4" width="3" height="1" fill="#000"/><rect x="14" y="4" width="2" height="1" fill="#000"/><rect x="4" y="5" width="1" height="1" fill="#000"/><rect x="6" y="5" width="1" height="1" fill="#000"/><rect x="14" y="5" width="1" height="1" fill="#000"/><rect x="16" y="5" width="1" height="1" fill="#000"/><rect x="3" y="6" width="1" height="1" fill="#000"/><rect x="6" y="6" width="1" height="1" fill="#000"/><rect x="14" y="6" width="1" height="1" fill="#000"/><rect x="17" y="6" width="1" height="1" fill="#000"/><rect x="6" y="7" width="1" height="1" fill="#000"/><rect x="14" y="7" width="1" height="1" fill="#000"/><rect x="5" y="8" width="12" height="1" fill="#880000"/><rect x="4" y="9" width="4" height="1" fill="#880000"/><rect x="14" y="9" width="4" height="1" fill="#880000"/></svg></div><div class="t" style="left:45px;top:126px;color:#000;">sit1</div><div class="t" style="left:130px;top:126px;color:#000;">br-lan</div><div class="t r" style="right:589px;top:126px;color:#000;">80</div><div class="t r" style="right:529px;top:126px;color:#000;">10</div><div style="left:6px;top:154px;width:861px;height:1px;background:#e8e8e8;"></div><div style="left:27px;top:140px;width:1px;height:15px;background:#e8e8e8;"></div><div style="left:127px;top:140px;width:1px;height:15px;background:#e8e8e8;"></div><div style="left:227px;top:140px;width:1px;height:15px;background:#e8e8e8;"></div><div style="left:287px;top:140px;width:1px;height:15px;background:#e8e8e8;"></div><div style="left:347px;top:140px;width:1px;height:15px;background:#e8e8e8;"></div><div style="left:392px;top:140px;width:1px;height:15px;background:#e8e8e8;"></div><div style="left:492px;top:140px;width:1px;height:15px;background:#e8e8e8;"></div><div style="left:573px;top:140px;width:1px;height:15px;background:#e8e8e8;"></div><div style="left:28px;top:140px;"><svg width="18" height="10" viewBox="0 0 18 10" shape-rendering="crispEdges"><rect x="6" y="1" width="1" height="1" fill="#000"/><rect x="14" y="1" width="1" height="1" fill="#000"/><rect x="6" y="2" width="1" height="1" fill="#000"/><rect x="14" y="2" width="1" height="1" fill="#000"/><rect x="5" y="3" width="4" height="1" fill="#000"/><rect x="12" y="3" width="4" height="1" fill="#000"/><rect x="5" y="4" width="2" height="1" fill="#000"/><rect x="9" y="4" width="3" height="1" fill="#000"/><rect x="14" y="4" width="2" height="1" fill="#000"/><rect x="4" y="5" width="1" height="1" fill="#000"/><rect x="6" y="5" width="1" height="1" fill="#000"/><rect x="14" y="5" width="1" height="1" fill="#000"/><rect x="16" y="5" width="1" height="1" fill="#000"/><rect x="3" y="6" width="1" height="1" fill="#000"/><rect x="6" y="6" width="1" height="1" fill="#000"/><rect x="14" y="6" width="1" height="1" fill="#000"/><rect x="17" y="6" width="1" height="1" fill="#000"/><rect x="6" y="7" width="1" height="1" fill="#000"/><rect x="14" y="7" width="1" height="1" fill="#000"/><rect x="5" y="8" width="12" height="1" fill="#880000"/><rect x="4" y="9" width="4" height="1" fill="#880000"/><rect x="14" y="9" width="4" height="1" fill="#880000"/></svg></div><div class="t" style="left:45px;top:141px;color:#000;">wan</div><div class="t" style="left:130px;top:141px;color:#000;">br-wan</div><div class="t r" style="right:589px;top:141px;color:#000;">80</div><div class="t r" style="right:529px;top:141px;color:#000;">10</div><div class="t" style="left:395px;top:141px;color:#000;">designated port</div><div style="left:5px;top:344px;width:863px;height:22px;background:#f0f0f0;"></div><div style="left:5px;top:344px;width:863px;height:1px;background:#a0a0a0;"></div><div style="left:5px;top:344px;width:1px;height:20px;background:#a0a0a0;"></div><div style="left:4px;top:365px;width:864px;height:1px;background:#a0a0a0;"></div><div class="t" style="left:8px;top:348px;color:#000;">4 items</div></div><div class="win" style="left:245px;top:203px;width:352px;height:498px;z-index:3"><div style="left:0px;top:0px;width:352px;height:498px;background:#000;"></div><div style="left:1px;top:1px;width:350px;height:496px;background:#f8f8f8;"></div><div style="left:1px;top:1px;width:350px;height:23px;background:#9c9ce0;"></div><div style="left:2px;top:2px;width:348px;height:494px;background:#f0f0f0;"></div><div style="left:2px;top:2px;width:348px;height:21px;background:#4e50c8;"></div><div class="t" style="left:6px;top:8px;color:#ffffff;">Switch</div><div style="left:332px;top:5px;width:15px;height:15px;background:#404040;"></div><div style="left:333px;top:6px;width:13px;height:13px;background:#ffffff;"></div><div style="left:334px;top:7px;width:12px;height:12px;background:#eceaec;"></div><div style="left:336px;top:9px;"><svg width="8" height="8" viewBox="0 0 8 8" shape-rendering="crispEdges"><path d="M1.3,1.3 L6.7,6.7 M6.7,1.3 L1.3,6.7" stroke="#282828" stroke-width="2.4" stroke-linecap="round" shape-rendering="geometricPrecision"/></svg></div><div style="left:315px;top:5px;width:15px;height:15px;background:#404040;"></div><div style="left:316px;top:6px;width:13px;height:13px;background:#ffffff;"></div><div style="left:317px;top:7px;width:12px;height:12px;background:#eceaec;"></div><div style="left:318px;top:8px;width:9px;height:9px;background:#303030;"></div><div style="left:319px;top:10px;width:7px;height:6px;background:#eceaec;"></div><div style="left:3px;top:47px;width:345px;height:1px;background:#ffffff;"></div><div style="left:3px;top:47px;width:1px;height:447px;background:#ffffff;"></div><div style="left:347px;top:47px;width:1px;height:447px;background:#a0a0a0;"></div><div style="left:7px;top:28px;width:42px;height:19px;background:#dadada;"></div><div style="left:48px;top:28px;width:1px;height:19px;background:#c4c4c4;"></div><div class="t" style="left:12px;top:32px;color:#000;">Switch</div><div style="left:50px;top:28px;width:30px;height:19px;background:#dadada;"></div><div style="left:79px;top:28px;width:1px;height:19px;background:#c4c4c4;"></div><div class="t" style="left:55px;top:32px;color:#000;">Port</div><div style="left:81px;top:28px;width:31px;height:19px;background:#dadada;"></div><div style="left:111px;top:28px;width:1px;height:19px;background:#c4c4c4;"></div><div class="t" style="left:86px;top:32px;color:#000;">Host</div><div style="left:157px;top:28px;width:31px;height:19px;background:#dadada;"></div><div style="left:187px;top:28px;width:1px;height:19px;background:#c4c4c4;"></div><div class="t" style="left:162px;top:32px;color:#000;">Rule</div><div style="left:112px;top:25px;width:44px;height:23px;background:#f0f0f0;"></div><div style="left:112px;top:25px;width:1px;height:23px;background:#ffffff;"></div><div style="left:112px;top:25px;width:44px;height:1px;background:#ffffff;"></div><div style="left:155px;top:25px;width:1px;height:23px;background:#a8a8a8;"></div><div class="t" style="left:120px;top:30px;color:#000;">VLAN</div><div style="left:5px;top:51px;width:23px;height:23px;background:#a0a0a0;"></div><div style="left:6px;top:52px;width:21px;height:21px;background:#ffffff;"></div><div style="left:7px;top:53px;width:20px;height:20px;background:#f0f0f0;"></div><div style="left:11px;top:57px;"><svg width="12" height="12" viewBox="0 0 12 12" shape-rendering="crispEdges"><rect x="4" y="0" width="4" height="12" fill="#000"/><rect x="0" y="4" width="12" height="4" fill="#000"/><rect x="5" y="1" width="2" height="10" fill="#0000ff"/><rect x="1" y="5" width="10" height="2" fill="#0000ff"/></svg></div><div style="left:31px;top:51px;width:23px;height:23px;background:#a0a0a0;"></div><div style="left:32px;top:52px;width:21px;height:21px;background:#ffffff;"></div><div style="left:33px;top:53px;width:20px;height:20px;background:#f0f0f0;"></div><div style="left:37px;top:61px;"><svg width="12" height="4" viewBox="0 0 12 4" shape-rendering="crispEdges"><rect x="0.5" y="0.5" width="11" height="3" fill="#fff" stroke="#a0a0a0"/></svg></div><div style="left:63px;top:51px;width:23px;height:23px;background:#a0a0a0;"></div><div style="left:64px;top:52px;width:21px;height:21px;background:#ffffff;"></div><div style="left:65px;top:53px;width:20px;height:20px;background:#f0f0f0;"></div><div style="left:69px;top:57px;"><svg width="14" height="12" viewBox="0 0 14 12" shape-rendering="crispEdges"><polygon points="0.5,6.5 2.5,4.5 4.5,6.5 10.5,0.5 12.5,2.5 4.5,10.5" fill="#f6f6f6" stroke="#a4a4a4" stroke-width="1" shape-rendering="geometricPrecision"/></svg></div><div style="left:89px;top:51px;width:23px;height:23px;background:#a0a0a0;"></div><div style="left:90px;top:52px;width:21px;height:21px;background:#ffffff;"></div><div style="left:91px;top:53px;width:20px;height:20px;background:#f0f0f0;"></div><div style="left:95px;top:58px;"><svg width="13" height="13" viewBox="0 0 13 13" shape-rendering="crispEdges"><polygon points="0.5,2.5 2.5,0.5 6,4 9.5,0.5 11.5,2.5 8,6 11.5,9.5 9.5,11.5 6,8 2.5,11.5 0.5,9.5 4,6" fill="#f6f6f6" stroke="#a4a4a4" stroke-width="1" shape-rendering="geometricPrecision"/></svg></div><div style="left:121px;top:51px;width:23px;height:23px;background:#a0a0a0;"></div><div style="left:122px;top:52px;width:21px;height:21px;background:#ffffff;"></div><div style="left:123px;top:53px;width:20px;height:20px;background:#f0f0f0;"></div><div style="left:126px;top:57px;"><svg width="14" height="14" viewBox="0 0 14 14" shape-rendering="crispEdges"><path d="M1,1 H13 L8.5,6 V12.5 H5.5 V6 Z" fill="#8c9ad0" stroke="#000" stroke-width="1.3" stroke-linejoin="round" shape-rendering="geometricPrecision"/></svg></div><div style="left:285px;top:53px;width:60px;height:18px;background:#a8a8a8;"></div><div style="left:286px;top:54px;width:58px;height:16px;background:#ffffff;"></div><div class="t" style="left:290px;top:57px;color:#9a9ab0;font-style:italic;transform:none;">Find</div><div style="left:5px;top:77px;width:341px;height:411px;background:#a0a0a0;"></div><div style="left:6px;top:78px;width:339px;height:409px;background:#ffffff;"></div><div style="left:5px;top:77px;width:341px;height:18px;background:#a0a0a0;"></div><div style="left:6px;top:78px;width:339px;height:16px;background:#ffffff;"></div><div style="left:7px;top:79px;width:338px;height:15px;background:#f0f0f0;"></div><div style="left:21px;top:78px;width:1px;height:16px;background:#a0a0a0;"></div><div style="left:22px;top:78px;width:1px;height:16px;background:#ffffff;"></div><div class="t" style="left:24px;top:81px;color:#000;">Switch</div><div style="left:101px;top:78px;width:1px;height:16px;background:#a0a0a0;"></div><div style="left:102px;top:78px;width:1px;height:16px;background:#ffffff;"></div><div class="t" style="left:104px;top:81px;color:#000;">VLAN ID</div><div style="left:151px;top:78px;width:1px;height:16px;background:#a0a0a0;"></div><div style="left:152px;top:78px;width:1px;height:16px;background:#ffffff;"></div><div class="t" style="left:154px;top:81px;color:#000;">Ports</div><div style="left:301px;top:78px;width:1px;height:16px;background:#a0a0a0;"></div><div style="left:302px;top:78px;width:1px;height:16px;background:#ffffff;"></div><div style="left:329px;top:78px;width:1px;height:16px;background:#a0a0a0;"></div><div style="left:330px;top:78px;width:1px;height:16px;background:#ffffff;"></div><div style="left:91px;top:84px;"><svg width="8" height="7" viewBox="0 0 8 7" shape-rendering="crispEdges"><rect x="3" y="0" width="1" height="1" fill="#a0a0a0"/><rect x="4" y="0" width="1" height="1" fill="#ffffff"/><rect x="2" y="1" width="2" height="1" fill="#a0a0a0"/><rect x="5" y="1" width="1" height="1" fill="#ffffff"/><rect x="2" y="2" width="1" height="1" fill="#a0a0a0"/><rect x="5" y="2" width="1" height="1" fill="#ffffff"/><rect x="1" y="3" width="1" height="1" fill="#a0a0a0"/><rect x="6" y="3" width="1" height="1" fill="#ffffff"/><rect x="1" y="4" width="1" height="1" fill="#a0a0a0"/><rect x="6" y="4" width="1" height="1" fill="#ffffff"/><rect x="0" y="5" width="1" height="1" fill="#a0a0a0"/><rect x="7" y="5" width="1" height="1" fill="#ffffff"/><rect x="0" y="6" width="8" height="1" fill="#ffffff"/></svg></div><div style="left:333px;top:84px;"><svg width="9" height="5" viewBox="0 0 9 5" shape-rendering="crispEdges"><polygon points="0,0 9,0 4.5,5" fill="#000"/></svg></div><div style="left:6px;top:109px;width:339px;height:1px;background:#e8e8e8;"></div><div style="left:21px;top:95px;width:1px;height:15px;background:#e8e8e8;"></div><div style="left:101px;top:95px;width:1px;height:15px;background:#e8e8e8;"></div><div style="left:151px;top:95px;width:1px;height:15px;background:#e8e8e8;"></div><div style="left:301px;top:95px;width:1px;height:15px;background:#e8e8e8;"></div><div class="t" style="left:24px;top:96px;color:#000;">switch1</div><div class="t r" style="right:203px;top:96px;color:#000;">3</div><div class="t" style="left:154px;top:96px;color:#000;">switch1 cpu, ether1, ether5</div><div style="left:6px;top:124px;width:339px;height:1px;background:#e8e8e8;"></div><div style="left:21px;top:110px;width:1px;height:15px;background:#e8e8e8;"></div><div style="left:101px;top:110px;width:1px;height:15px;background:#e8e8e8;"></div><div style="left:151px;top:110px;width:1px;height:15px;background:#e8e8e8;"></div><div style="left:301px;top:110px;width:1px;height:15px;background:#e8e8e8;"></div><div class="t" style="left:24px;top:111px;color:#000;">switch1</div><div class="t r" style="right:203px;top:111px;color:#000;">2</div><div class="t" style="left:154px;top:111px;color:#000;">switch1 cpu, ether3, ether4, ...</div><div style="left:6px;top:139px;width:339px;height:1px;background:#e8e8e8;"></div><div style="left:21px;top:125px;width:1px;height:15px;background:#e8e8e8;"></div><div style="left:101px;top:125px;width:1px;height:15px;background:#e8e8e8;"></div><div style="left:151px;top:125px;width:1px;height:15px;background:#e8e8e8;"></div><div style="left:301px;top:125px;width:1px;height:15px;background:#e8e8e8;"></div><div class="t" style="left:24px;top:126px;color:#000;">switch1</div><div class="t r" style="right:203px;top:126px;color:#000;">1</div><div class="t" style="left:154px;top:126px;color:#000;">switch1 cpu, ether2, ether5</div><div style="left:347px;top:47px;width:1px;height:451px;background:#c8c8c8;"></div></div>
</body></html>
